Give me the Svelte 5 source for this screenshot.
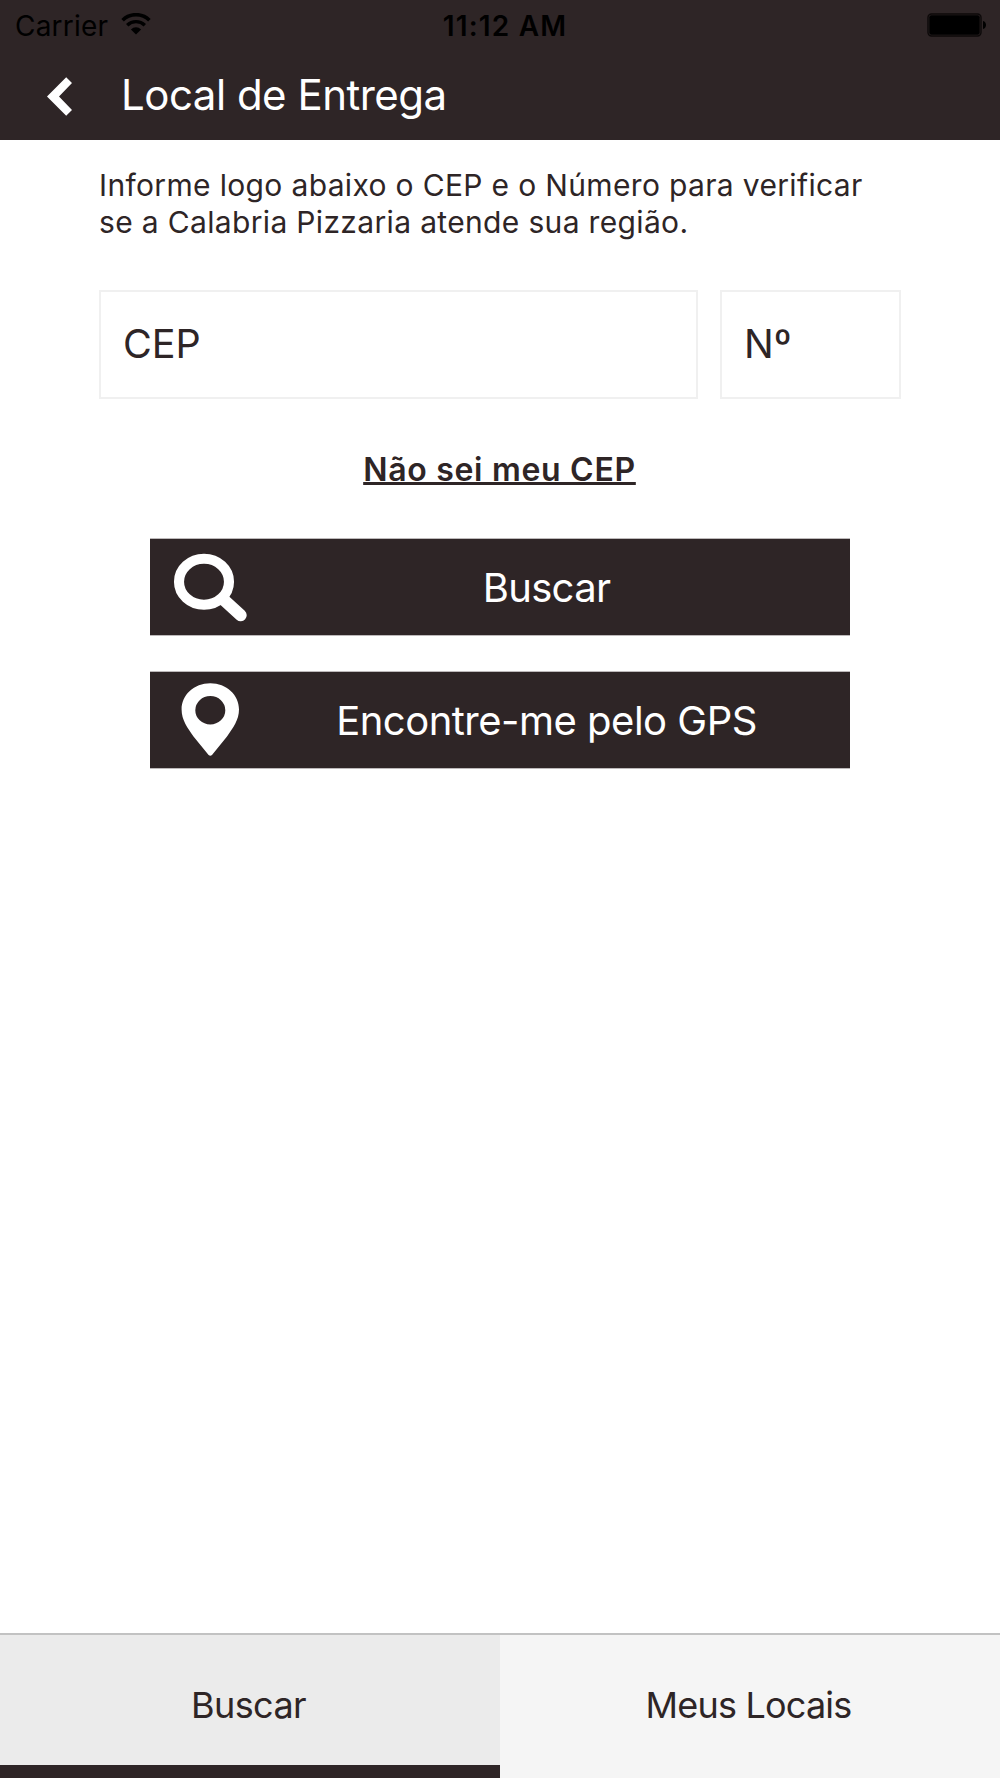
<script>
    let cep = $state("")
    let number = $state("")
    let active = $state("buscar")

    const tabs = [
        { id: "buscar", label: "Buscar" },
        { id: "locais", label: "Meus Locais" }
    ]
</script>

<div class="screen">
    <header>
        <div class="status-bar">
            <div class="carrier">
                <span>Carrier</span>
                <svg width="30" height="22" viewBox="0 0 30 22">
                    <path d="M1.6 7.2a19 19 0 0 1 26.8 0" fill="none" stroke="#000" stroke-width="3.6"/>
                    <path d="M6.2 12.2a12.6 12.6 0 0 1 17.6 0" fill="none" stroke="#000" stroke-width="3.4"/>
                    <path d="M9.9 16.4a7.4 7.4 0 0 1 10.2 0L15 21.5z"/>
                </svg>
            </div>
            <span class="time">11:12 AM</span>
            <svg class="battery" width="60" height="24" viewBox="0 0 60 24">
                <rect x="1" y="1" width="53" height="22" rx="3.5" fill="none" stroke="#0c0909" stroke-width="1.4"/>
                <rect x="2.3" y="2.3" width="50.4" height="19.4" rx="2"/>
                <path d="M56 8c4 1 4 7 0 8z"/>
            </svg>
        </div>
        <div class="nav-bar">
            <button class="back" aria-label="Voltar">
                <svg width="26" height="39" viewBox="0 0 26 39">
                    <path d="M0 19.5L19.2 0.3L25 6L12 19.5L25 33L19.2 38.8z" fill="#fff"/>
                </svg>
            </button>
            <h1>Local de Entrega</h1>
        </div>
    </header>

    <main>
        <p class="intro">
            Informe logo abaixo o CEP e o Número para verificar<br>
            se a Calabria Pizzaria atende sua região.
        </p>
        <div class="fields">
            <input class="cep" placeholder="CEP" bind:value={cep}>
            <input class="number" placeholder="Nº" bind:value={number}>
        </div>
        <a class="unknown" href="#cep">Não sei meu CEP</a>
        <button class="action search">
            <svg width="76" height="76" viewBox="0 0 76 76">
                <ellipse cx="31" cy="32.7" rx="25" ry="23" fill="none" stroke="#fff" stroke-width="10.1"/>
                <path d="M51 51L67.7 66.2" stroke="#fff" stroke-width="12" stroke-linecap="round"/>
            </svg>
            <span>Buscar</span>
        </button>
        <button class="action">
            <svg width="76" height="76" viewBox="0 0 76 76">
                <path fill="#fff" fill-rule="evenodd" d="M37.3 1.3C21 1.3 8.6 13 8.6 27.6C8.6 38 14.5 46 20.5 54.5L35.6 73Q37.3 74.6 39 73L54 54.5C60 46 66 38 66 27.6C66 13 53.6 1.3 37.3 1.3zM37.3 14a15 14.2 0 1 1 0 28.4a15 14.2 0 1 1 0-28.4z"/>
            </svg>
            <span>Encontre-me pelo GPS</span>
        </button>
    </main>

    <nav>
        {#each tabs as tab}
            <button class="tab {tab.id}" class:active={active === tab.id} onclick={() => active = tab.id}>
                {tab.label}
            </button>
        {/each}
    </nav>
</div>

<style>
    :global(body) {
        background-color: #fff;
    }
    .screen {
        width: 1000px;
        height: 1778px;
        display: flex;
        flex-direction: column;
        overflow: hidden;
        font-family: Inter, "Liberation Sans", sans-serif;
        color: #2e2526;
    }
    button {
        border: none;
        border-radius: 0;
        padding: 0;
        background: none;
        font-family: inherit;
        color: inherit;
        cursor: pointer;
    }
    header {
        height: 140px;
        background-color: #2e2526;
    }
    .status-bar {
        display: grid;
        grid-template-columns: 1fr auto 1fr;
        align-items: center;
        height: 50px;
        padding: 0 13px 0 15px;
        font-size: 28px;
        color: #000;
    }
    .carrier {
        display: flex;
        align-items: center;
        gap: 13px;
        padding-top: 1px;
        letter-spacing: 0.2px;
    }
    .carrier svg {
        margin-top: -3px;
    }
    .time {
        padding: 1px 0 0 8px;
        font-weight: 600;
        letter-spacing: 1.2px;
    }
    .battery {
        justify-self: end;
    }
    .nav-bar {
        display: flex;
        align-items: center;
        height: 90px;
        padding-left: 47px;
    }
    .back {
        width: 74px;
        height: 39px;
        margin-top: 3px;
        text-align: left;
    }
    .back svg {
        display: block;
    }
    h1 {
        margin: 0;
        font-size: 42px;
        font-weight: 400;
        line-height: 88px;
        letter-spacing: -0.5px;
        color: #fff;
    }
    main {
        flex: 1;
        display: flex;
        flex-direction: column;
        align-items: center;
    }
    .intro {
        align-self: flex-start;
        margin: 27px 0 0 99px;
        font-size: 30px;
        line-height: 37px;
        letter-spacing: 0.34px;
        white-space: nowrap;
    }
    .fields {
        display: flex;
        gap: 22px;
        width: 802px;
        margin: 49px 0 0;
    }
    input {
        box-sizing: border-box;
        height: 109px;
        padding: 0 22px 1px;
        border: 2px solid #f0f0f0;
        outline: none;
        font-family: inherit;
        font-size: 39.5px;
        color: #2e2526;
    }
    input::placeholder {
        color: #2e2526;
        opacity: 1;
    }
    .cep {
        width: 599px;
    }
    .number {
        width: 181px;
    }
    .unknown {
        margin: 50px 1px 48px 0;
        font-size: 32px;
        font-weight: 600;
        line-height: 42px;
        letter-spacing: 0.7px;
        color: inherit;
        text-decoration-thickness: 3px;
        text-underline-offset: 1px;
        text-decoration-skip-ink: none;
    }
    .action {
        display: flex;
        align-items: center;
        width: 700px;
        height: 96px;
        margin-bottom: 37px;
        padding-left: 23px;
        background-color: #2e2526;
        box-shadow: 0 1px #bdb9ba, 0 -1px #bdb9ba;
        color: #fff;
        font-size: 40px;
        letter-spacing: -0.5px;
    }
    .action span {
        flex: 1;
        margin-left: -6px;
        padding-top: 1px;
    }
    .search {
        letter-spacing: -0.7px;
    }
    nav {
        display: flex;
        height: 143px;
        border-top: 2px solid #c2c2c2;
    }
    .tab {
        box-sizing: border-box;
        width: 500px;
        height: 143px;
        padding: 10px 3px 0 0;
        border-bottom: 13px solid #f5f5f5;
        background-color: #f5f5f5;
        font-size: 36px;
        letter-spacing: -0.6px;
    }
    .locais {
        letter-spacing: -0.8px;
    }
    .tab.active {
        border-bottom-color: #2e2526;
        background-color: #ebebeb;
    }
</style>
